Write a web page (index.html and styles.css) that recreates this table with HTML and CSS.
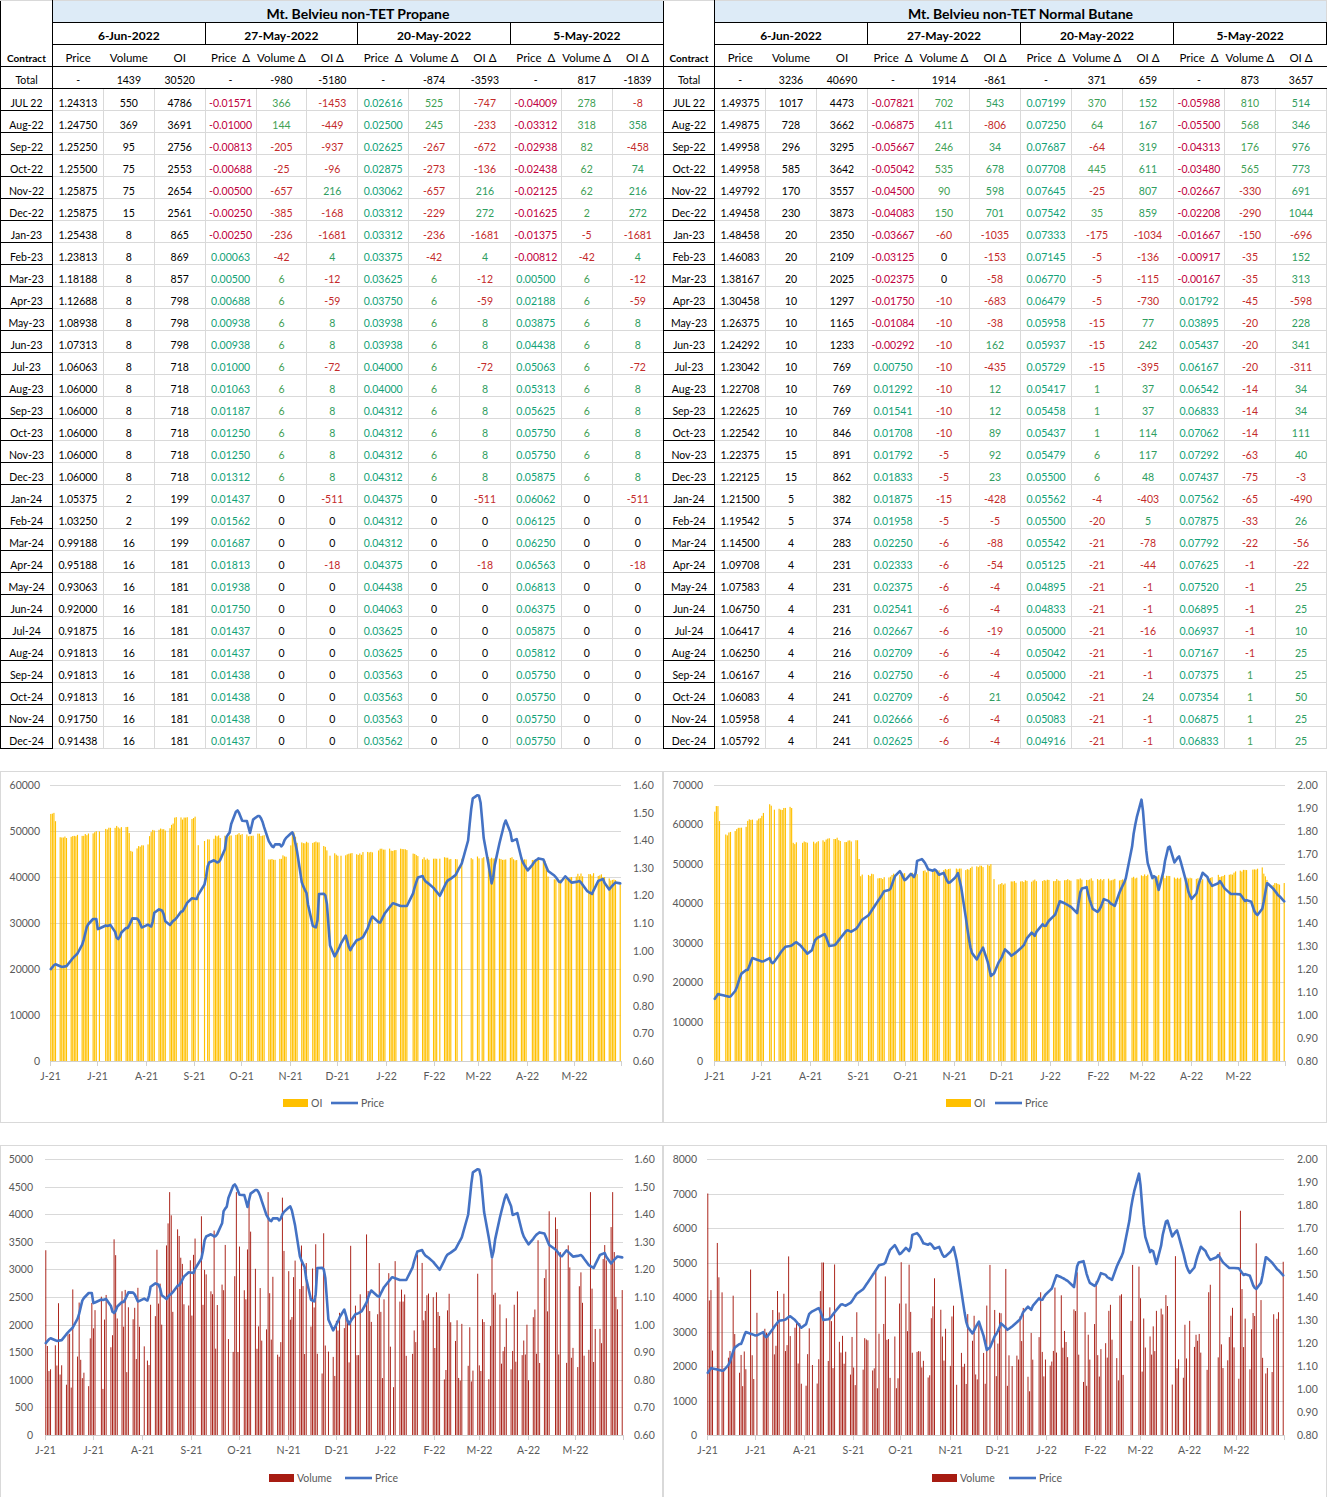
FILE: index.html
```html
<!DOCTYPE html>
<html lang="en">
<head>
<meta charset="utf-8">
<title>Mt. Belvieu non-TET</title>
<link rel="stylesheet" href="styles.css">
</head>
<body>
<div class="tables">
  <table class="tbl left" id="t1"></table>
  <table class="tbl right" id="t2"></table>
</div>
<div class="charts">
  <div class="chart" id="c1"></div>
  <div class="chart" id="c2"></div>
  <div class="chart" id="c3"></div>
  <div class="chart" id="c4"></div>
</div>
<script src="app.js"></script>
</body>
</html>
```
FILE: styles.css
```css
* { box-sizing: border-box; }
body {
  margin: 0;
  width: 1327px;
  background: #fff;
  color: #000;
  font-family: Lato, "DejaVu Sans", sans-serif;
}
.tables { display: flex; align-items: flex-start; }
.tbl { border-collapse: collapse; table-layout: fixed; }
.tbl.left { width: 663px; }
.tbl.right { width: 664px; }
.tbl.left col.c0 { width: 52px; }
.tbl.right col.c0 { width: 51px; }
.tbl td {
  height: 22px;
  padding: 0;
  font-size: 10.5px;
  line-height: 13px;
  text-align: center;
  vertical-align: bottom;
  white-space: nowrap;
  overflow: hidden;
  border: 1px solid #d9d9d9;
}
.tbl.left td:last-child { border-right: none; }
.tbl td.title {
  background: #ddebf7;
  font-weight: 700;
  font-size: 14px;
  vertical-align: middle;
  padding: 3px 0 0;
  border-left: 1px solid #000;
  border-bottom: 1px solid #000;
}
.tbl .r-date td {
  border: 1px solid #000;
  font-weight: 700;
  font-size: 12px;
  vertical-align: middle;
  padding: 4px 0 0;
}
.tbl .r-head td {
  border-left: none;
  border-right: none;
  border-bottom: 1px solid #000;
  font-size: 11.5px;
  vertical-align: middle;
  padding: 4px 0 0;
}
.tbl .r-total td {
  border-left: none;
  border-right: none;
  border-bottom: 1px solid #000;
  vertical-align: middle;
  padding: 5px 0 0;
}
.tbl td.con {
  border-left: 1px solid #000;
  border-right: 1px solid #000;
  border-bottom: 1px solid #000;
  border-top: 1px solid #000;
}
.tbl td.con.top { border-bottom: none; border-top-color: #d9d9d9; }
.tbl td.chead { font-weight: 700; font-size: 10px; border-top: none; padding-top: 6px; }
.np { color: #c00040; }
.nv { color: #c42a2a; }
.no { color: #c42a2a; }
.pp { color: #12a276; }
.pv { color: #3f9f55; }
.po { color: #2f9d5e; }

.charts {
  display: grid;
  grid-template-columns: 663px 664px;
  grid-template-rows: 352px 353px;
  row-gap: 22px;
  margin-top: 22px;
}
.chart {
  outline: 1px solid #d9d9d9;
  outline-offset: -1px;
  background: #fff;
}
.chart svg { display: block; }
.chart text {
  font-family: Lato, "DejaVu Sans", sans-serif;
  font-size: 10.5px;
  fill: #595959;
}
.chart .grid { stroke: #d9d9d9; stroke-width: 1; }
.chart .axis { stroke: #d0d0d0; stroke-width: 1; }
.chart .price { fill: none; stroke: #4472c4; stroke-width: 2.6; stroke-linejoin: round; stroke-linecap: round; }
```
FILE: app.js
```js
(function () {
  var DATES = ['6-Jun-2022', '27-May-2022', '20-May-2022', '5-May-2022'];
  var P = [
    'Total - 1439 30520 - -980 -5180 - -874 -3593 - 817 -1839',
    'JUL_22 1.24313 550 4786 -0.01571 366 -1453 0.02616 525 -747 -0.04009 278 -8',
    'Aug-22 1.24750 369 3691 -0.01000 144 -449 0.02500 245 -233 -0.03312 318 358',
    'Sep-22 1.25250 95 2756 -0.00813 -205 -937 0.02625 -267 -672 -0.02938 82 -458',
    'Oct-22 1.25500 75 2553 -0.00688 -25 -96 0.02875 -273 -136 -0.02438 62 74',
    'Nov-22 1.25875 75 2654 -0.00500 -657 216 0.03062 -657 216 -0.02125 62 216',
    'Dec-22 1.25875 15 2561 -0.00250 -385 -168 0.03312 -229 272 -0.01625 2 272',
    'Jan-23 1.25438 8 865 -0.00250 -236 -1681 0.03312 -236 -1681 -0.01375 -5 -1681',
    'Feb-23 1.23813 8 869 0.00063 -42 4 0.03375 -42 4 -0.00812 -42 4',
    'Mar-23 1.18188 8 857 0.00500 6 -12 0.03625 6 -12 0.00500 6 -12',
    'Apr-23 1.12688 8 798 0.00688 6 -59 0.03750 6 -59 0.02188 6 -59',
    'May-23 1.08938 8 798 0.00938 6 8 0.03938 6 8 0.03875 6 8',
    'Jun-23 1.07313 8 798 0.00938 6 8 0.03938 6 8 0.04438 6 8',
    'Jul-23 1.06063 8 718 0.01000 6 -72 0.04000 6 -72 0.05063 6 -72',
    'Aug-23 1.06000 8 718 0.01063 6 8 0.04000 6 8 0.05313 6 8',
    'Sep-23 1.06000 8 718 0.01187 6 8 0.04312 6 8 0.05625 6 8',
    'Oct-23 1.06000 8 718 0.01250 6 8 0.04312 6 8 0.05750 6 8',
    'Nov-23 1.06000 8 718 0.01250 6 8 0.04312 6 8 0.05750 6 8',
    'Dec-23 1.06000 8 718 0.01312 6 8 0.04312 6 8 0.05875 6 8',
    'Jan-24 1.05375 2 199 0.01437 0 -511 0.04375 0 -511 0.06062 0 -511',
    'Feb-24 1.03250 2 199 0.01562 0 0 0.04312 0 0 0.06125 0 0',
    'Mar-24 0.99188 16 199 0.01687 0 0 0.04312 0 0 0.06250 0 0',
    'Apr-24 0.95188 16 181 0.01813 0 -18 0.04375 0 -18 0.06563 0 -18',
    'May-24 0.93063 16 181 0.01938 0 0 0.04438 0 0 0.06813 0 0',
    'Jun-24 0.92000 16 181 0.01750 0 0 0.04063 0 0 0.06375 0 0',
    'Jul-24 0.91875 16 181 0.01437 0 0 0.03625 0 0 0.05875 0 0',
    'Aug-24 0.91813 16 181 0.01437 0 0 0.03625 0 0 0.05812 0 0',
    'Sep-24 0.91813 16 181 0.01438 0 0 0.03563 0 0 0.05750 0 0',
    'Oct-24 0.91813 16 181 0.01438 0 0 0.03563 0 0 0.05750 0 0',
    'Nov-24 0.91750 16 181 0.01438 0 0 0.03563 0 0 0.05750 0 0',
    'Dec-24 0.91438 16 181 0.01437 0 0 0.03562 0 0 0.05750 0 0'
  ];
  var B = [
    'Total - 3236 40690 - 1914 -861 - 371 659 - 873 3657',
    'JUL_22 1.49375 1017 4473 -0.07821 702 543 0.07199 370 152 -0.05988 810 514',
    'Aug-22 1.49875 728 3662 -0.06875 411 -806 0.07250 64 167 -0.05500 568 346',
    'Sep-22 1.49958 296 3295 -0.05667 246 34 0.07687 -64 319 -0.04313 176 976',
    'Oct-22 1.49958 585 3642 -0.05042 535 678 0.07708 445 611 -0.03480 565 773',
    'Nov-22 1.49792 170 3557 -0.04500 90 598 0.07645 -25 807 -0.02667 -330 691',
    'Dec-22 1.49458 230 3873 -0.04083 150 701 0.07542 35 859 -0.02208 -290 1044',
    'Jan-23 1.48458 20 2350 -0.03667 -60 -1035 0.07333 -175 -1034 -0.01667 -150 -696',
    'Feb-23 1.46083 20 2109 -0.03125 0 -153 0.07145 -5 -136 -0.00917 -35 152',
    'Mar-23 1.38167 20 2025 -0.02375 0 -58 0.06770 -5 -115 -0.00167 -35 313',
    'Apr-23 1.30458 10 1297 -0.01750 -10 -683 0.06479 -5 -730 0.01792 -45 -598',
    'May-23 1.26375 10 1165 -0.01084 -10 -38 0.05958 -15 77 0.03895 -20 228',
    'Jun-23 1.24292 10 1233 -0.00292 -10 162 0.05937 -15 242 0.05437 -20 341',
    'Jul-23 1.23042 10 769 0.00750 -10 -435 0.05729 -15 -395 0.06167 -20 -311',
    'Aug-23 1.22708 10 769 0.01292 -10 12 0.05417 1 37 0.06542 -14 34',
    'Sep-23 1.22625 10 769 0.01541 -10 12 0.05458 1 37 0.06833 -14 34',
    'Oct-23 1.22542 10 846 0.01708 -10 89 0.05437 1 114 0.07062 -14 111',
    'Nov-23 1.22375 15 891 0.01792 -5 92 0.05479 6 117 0.07292 -63 40',
    'Dec-23 1.22125 15 862 0.01833 -5 23 0.05500 6 48 0.07437 -75 -3',
    'Jan-24 1.21500 5 382 0.01875 -15 -428 0.05562 -4 -403 0.07562 -65 -490',
    'Feb-24 1.19542 5 374 0.01958 -5 -5 0.05500 -20 5 0.07875 -33 26',
    'Mar-24 1.14500 4 283 0.02250 -6 -88 0.05542 -21 -78 0.07792 -22 -56',
    'Apr-24 1.09708 4 231 0.02333 -6 -54 0.05125 -21 -44 0.07625 -1 -22',
    'May-24 1.07583 4 231 0.02375 -6 -4 0.04895 -21 -1 0.07520 -1 25',
    'Jun-24 1.06750 4 231 0.02541 -6 -4 0.04833 -21 -1 0.06895 -1 25',
    'Jul-24 1.06417 4 216 0.02667 -6 -19 0.05000 -21 -16 0.06937 -1 10',
    'Aug-24 1.06250 4 216 0.02709 -6 -4 0.05042 -21 -1 0.07167 -1 25',
    'Sep-24 1.06167 4 216 0.02750 -6 -4 0.05000 -21 -1 0.07375 1 25',
    'Oct-24 1.06083 4 241 0.02709 -6 21 0.05042 -21 24 0.07354 1 50',
    'Nov-24 1.05958 4 241 0.02666 -6 -4 0.05083 -21 -1 0.06875 1 25',
    'Dec-24 1.05792 4 241 0.02625 -6 -4 0.04916 -21 -1 0.06833 1 25'
  ];

  function cellClass(v, i) {
    if (i < 3 || v === '-' || Number(v) === 0) return '';
    var k = (i - 3) % 3;
    var neg = v.charAt(0) === '-';
    return (neg ? 'n' : 'p') + ['p', 'v', 'o'][k];
  }

  function buildTable(el, title, rows) {
    var h = '<colgroup><col class="c0">';
    for (var c = 0; c < 12; c++) h += '<col>';
    h += '</colgroup>';
    h += '<tr class="r-title"><td class="con top" rowspan="2"></td><td class="title" colspan="12">' + title + '</td></tr>';
    h += '<tr class="r-date">';
    DATES.forEach(function (d) { h += '<td class="date" colspan="3">' + d + '</td>'; });
    h += '</tr>';
    h += '<tr class="r-head"><td class="con chead">Contract</td><td>Price</td><td>Volume</td><td>OI</td>';
    for (var j = 0; j < 3; j++) h += '<td>Price&nbsp;&nbsp;\u0394</td><td>Volume \u0394</td><td>OI \u0394</td>';
    h += '</tr>';
    rows.forEach(function (r, ri) {
      var t = r.split(' ');
      h += '<tr' + (ri === 0 ? ' class="r-total"' : '') + '><td class="con">' + t[0].replace('_', ' ') + '</td>';
      for (var i = 1; i < t.length; i++) {
        var cl = ri === 0 ? '' : cellClass(t[i], i - 1);
        h += '<td' + (cl ? ' class="' + cl + '"' : '') + '>' + t[i] + '</td>';
      }
      h += '</tr>';
    });
    el.innerHTML = h;
  }
  buildTable(document.getElementById('t1'), 'Mt. Belvieu non-TET Propane', P);
  buildTable(document.getElementById('t2'), 'Mt. Belvieu non-TET Normal Butane', B);

  /* ---------- charts ---------- */
  function rng(a) {
    return function () {
      a |= 0; a = a + 0x6D2B79F5 | 0;
      var t = Math.imul(a ^ a >>> 15, 1 | a);
      t = t + Math.imul(t ^ t >>> 7, 61 | t) ^ t;
      return ((t ^ t >>> 14) >>> 0) / 4294967296;
    };
  }
  function interp(kp, f) {
    if (f <= kp[0][0]) return kp[0][1];
    for (var i = 1; i < kp.length; i++) {
      if (f <= kp[i][0]) {
        var a = kp[i - 1], b = kp[i];
        var d = b[0] - a[0];
        var t = d ? (f - a[0]) / d : 1;
        return a[1] + (b[1] - a[1]) * t;
      }
    }
    return kp[kp.length - 1][1];
  }

  var priceP = [[50,969],[55,963],[62,966],[67,965],[72,958],[78,952],[83,942],[87,925],[92,918],[97,918],[98,930],[102,923],[107,925],[113,923],[117,938],[119,938],[123,927],[128,927],[133,916],[138,918],[142,927],[147,923],[152,926],[154,912],[158,908],[163,910],[167,928],[173,920],[176,918],[178,912],[183,910],[187,902],[190,897],[197,898],[200,888],[205,883],[208,863],[212,858],[218,862],[223,855],[225,848],[227,832],[229,835],[233,813],[238,809],[243,822],[247,820],[250,832],[254,815],[260,815],[263,822],[267,837],[273,847],[277,840],[282,846],[285,838],[290,833],[293,831],[297,850],[300,877],[304,887],[307,893],[310,923],[313,925],[317,927],[319,893],[323,892],[326,895],[328,913],[331,960],[335,955],[340,945],[345,932],[350,950],[355,940],[360,938],[365,935],[372,915],[376,920],[380,922],[385,912],[393,902],[400,905],[410,905],[415,885],[420,870],[425,880],[432,885],[440,895],[447,880],[455,875],[462,862],[468,840],[472,800],[474,793],[480,795],[484,840],[488,860],[492,885],[495,862],[500,840],[505,820],[508,818],[512,840],[517,838],[522,860],[528,870],[535,860],[542,855],[548,870],[555,875],[560,882],[565,875],[572,882],[580,880],[587,890],[592,893],[598,880],[603,878],[608,890],[612,885],[617,880],[621,883]]
    .map(function (p) { return [(p[0] - 50) / 571, 0.6 + (1060 - p[1]) / 276]; });

  var priceB = [[714,999],[718,993],[722,994],[730,996],[736,989],[740,976],[743,969],[748,969],[752,957],[758,959],[763,961],[768,953],[772,963],[776,959],[781,951],[786,945],[791,945],[796,941],[801,945],[806,951],[810,956],[815,939],[820,935],[825,933],[830,947],[836,943],[842,935],[847,929],[852,931],[857,927],[862,919],[868,915],[874,906],[880,897],[885,889],[890,889],[895,875],[900,870],[905,880],[910,872],[915,877],[917,860],[922,858],[925,862],[930,872],[935,868],[940,875],[943,870],[948,882],[953,880],[958,872],[962,890],[966,918],[970,945],[975,962],[980,952],[984,945],[988,962],[992,980],[996,965],[1001,958],[1006,946],[1011,955],[1018,950],[1024,944],[1030,930],[1035,935],[1040,920],[1045,926],[1050,918],[1055,914],[1060,900],[1066,903],[1071,906],[1076,920],[1080,892],[1085,880],[1090,900],[1095,914],[1100,908],[1105,895],[1110,902],[1115,905],[1120,890],[1125,880],[1130,862],[1134,830],[1138,810],[1142,797],[1146,848],[1150,880],[1155,874],[1160,894],[1165,860],[1169,843],[1174,862],[1179,855],[1184,872],[1189,893],[1194,902],[1199,882],[1204,868],[1209,880],[1214,888],[1220,880],[1225,888],[1231,893],[1240,893],[1245,900],[1250,897],[1255,912],[1260,916],[1263,905],[1267,882],[1272,886],[1278,894],[1283,898],[1285,902]]
    .map(function (p) { return [(p[0] - 714) / 571, 0.8 + (1060 - p[1]) / 276 * 1.2]; });

  var oiP = [[50,53.7],[55,53.7],[57,48.5],[80,49],[95,49.5],[100,50.3],[125,51],[129,51],[130,45.5],[145,47.2],[149,47.5],[150,50],[170,50.5],[175,52.7],[192,52.9],[196,52.9],[197,46.8],[210,48.5],[235,49.2],[265,49.2],[268,43.5],[285,44.5],[290,45.5],[293,50],[297,47.5],[320,47.8],[330,44.8],[370,45.2],[380,46],[410,46],[420,44],[470,44.2],[545,43.8],[548,40],[560,39.5],[580,40.5],[600,40.5],[621,38.5]]
    .map(function (p) { return [(p[0] - 50) / 571, p[1] * 1000]; });

  var oiB = [[714,63],[717,65],[719,64.5],[720,57],[725,57.2],[731,58],[737,58.5],[740,59.4],[747,59.5],[748,61],[760,61.2],[763,63],[770,65],[775,63.5],[782,64],[792,64.4],[793,55.3],[800,55.3],[803,55.6],[820,55.4],[830,56.5],[837,56.5],[842,55.8],[858,56],[860,47.2],[873,47.2],[878,46.4],[890,46.4],[893,47.4],[920,47.7],[930,48.4],[960,48.5],[985,49.5],[992,50],[995,44.5],[1010,45.5],[1060,46],[1130,46],[1140,47.2],[1200,46],[1230,47.5],[1262,49],[1268,45],[1285,45]]
    .map(function (p) { return [(p[0] - 714) / 571, p[1] * 1000]; });

  var volPkp = [[0,1700],[0.15,1900],[0.2,2900],[0.45,2800],[0.5,1900],[0.85,1900],[0.9,2700],[1,2700]];
  var volBkp = [[0,3800],[0.05,3100],[0.3,3000],[0.5,2900],[0.6,2400],[0.7,3000],[0.9,3200],[1,3400]];

  var N = 364;
  var hol = { '2021-07-05': 1, '2021-09-06': 1, '2021-11-25': 1, '2021-12-24': 1, '2022-01-17': 1, '2022-02-21': 1, '2022-04-15': 1 };
  var days = [];
  for (var d = 0; d < N; d++) {
    var dt = new Date(Date.UTC(2021, 5, 1 + d));
    var wd = dt.getUTCDay();
    if (wd === 0 || wd === 6) continue;
    if (hol[dt.toISOString().slice(0, 10)]) continue;
    days.push(d);
  }
  var t0 = Date.UTC(2021, 5, 1);
  var months = [];
  for (var m = 0; m < 12; m++) {
    months.push({
      d: (Date.UTC(2021, 5 + m, 1) - t0) / 86400000,
      label: 'JJASONDJFMAM'.charAt(m) + '-' + (m < 7 ? '21' : '22')
    });
  }

  function genVolume(kp, seed, cap, spikes) {
    var r = rng(seed);
    return days.map(function (d) {
      var f = (d + 0.5) / N;
      var base = interp(kp, f);
      var v = base * (0.45 + r() * 0.95);
      if (r() < 0.08) v = base * 1.45 + r() * 900;
      if (r() < 0.05) v = 0;
      spikes.forEach(function (s) { if (Math.abs(f - s[0]) < 0.0015) v = s[1]; });
      return Math.min(v, cap);
    });
  }
  function genOI(kp, seed) {
    var r = rng(seed);
    return days.map(function (d) {
      var f = (d + 0.5) / N;
      var v = interp(kp, f) + (r() - 0.5) * 700;
      if (r() < 0.04) v = 0;
      return v;
    });
  }

  var charts = [
    { id: 'c1', w: 663, h: 352, L: 50, R: 621, T: 14, Bt: 290, lmax: 60000, lstep: 10000, rmin: 0.6, rmax: 1.6, lx: 40, rx: 633,
      color: '#ffc000', bars: genOI(oiP, 11), price: priceP, bw: 1.15, leg: { sw: 283, label: 'OI', ln: 331 }, ly: 332 },
    { id: 'c2', w: 664, h: 352, L: 51, R: 622, T: 14, Bt: 290, lmax: 70000, lstep: 10000, rmin: 0.8, rmax: 2.0, lx: 40, rx: 634,
      color: '#ffc000', bars: genOI(oiB, 23), price: priceB, bw: 1.15, leg: { sw: 283, label: 'OI', ln: 332 }, ly: 332 },
    { id: 'c3', w: 663, h: 353, L: 45, R: 623, T: 14, Bt: 290, lmax: 5000, lstep: 500, rmin: 0.6, rmax: 1.6, lx: 33, rx: 634,
      color: '#a71c12', bars: genVolume(volPkp, 7, 4400, [[0.216, 4400], [0.41, 4300]]), price: priceP, bw: 0.95, leg: { sw: 269, label: 'Volume', ln: 345 }, ly: 333 },
    { id: 'c4', w: 664, h: 353, L: 44, R: 621, T: 14, Bt: 290, lmax: 8000, lstep: 1000, rmin: 0.8, rmax: 2.0, lx: 34, rx: 634,
      color: '#a71c12', bars: genVolume(volBkp, 5, 7000, [[0.002, 7000], [0.924, 6500], [0.2, 5000]]), price: priceB, bw: 0.95, leg: { sw: 269, label: 'Volume', ln: 346 }, ly: 333 }
  ];

  function fx(c, d) { return c.L + d / N * (c.R - c.L); }

  charts.forEach(function (c) {
    var W = c.R - c.L, H = c.Bt - c.T;
    var s = '<svg xmlns="http://www.w3.org/2000/svg" width="' + c.w + '" height="' + c.h + '" viewBox="0 0 ' + c.w + ' ' + c.h + '">';
    var n = Math.round(c.lmax / c.lstep), i, y;
    for (i = 0; i <= n; i++) {
      y = c.Bt - H * i / n;
      if (i > 0) s += '<line class="grid" x1="' + c.L + '" x2="' + c.R + '" y1="' + (Math.round(y) + 0.5) + '" y2="' + (Math.round(y) + 0.5) + '"/>';
      s += '<text x="' + c.lx + '" y="' + (y + 4) + '" text-anchor="end">' + (c.lstep * i) + '</text>';
    }
    var rn = Math.round((c.rmax - c.rmin) / 0.1);
    for (i = 0; i <= rn; i++) {
      y = c.Bt - H * i / rn;
      s += '<text x="' + c.rx + '" y="' + (y + 4) + '">' + (c.rmin + 0.1 * i).toFixed(2) + '</text>';
    }
    var bars = '';
    days.forEach(function (d, k) {
      var v = c.bars[k];
      if (!v || v <= 0) return;
      var bh = v / c.lmax * H;
      var x = fx(c, d + 0.5) - c.bw / 2;
      bars += '<rect x="' + x.toFixed(2) + '" y="' + (c.Bt - bh).toFixed(2) + '" width="' + c.bw + '" height="' + bh.toFixed(2) + '"/>';
    });
    s += '<g fill="' + c.color + '">' + bars + '</g>';
    s += '<line class="axis" x1="' + c.L + '" x2="' + c.R + '" y1="' + (c.Bt + 0.5) + '" y2="' + (c.Bt + 0.5) + '"/>';
    months.forEach(function (mo) {
      var x = Math.round(fx(c, mo.d)) + 0.5;
      s += '<line class="axis" x1="' + x + '" x2="' + x + '" y1="' + c.Bt + '" y2="' + (c.Bt + 5) + '"/>';
      s += '<text x="' + x + '" y="' + (c.Bt + 19) + '" text-anchor="middle">' + mo.label + '</text>';
    });
    s += '<line class="axis" x1="' + (c.R + 0.5) + '" x2="' + (c.R + 0.5) + '" y1="' + c.Bt + '" y2="' + (c.Bt + 5) + '"/>';
    var pts = days.map(function (d) {
      var f = (d + 0.5) / N;
      var p = interp(c.price, f);
      var yy = c.Bt - (p - c.rmin) / (c.rmax - c.rmin) * H;
      return fx(c, d + 0.5).toFixed(1) + ',' + yy.toFixed(1);
    });
    s += '<polyline class="price" points="' + pts.join(' ') + '"/>';
    var lg = c.leg, ly = c.ly;
    s += '<rect x="' + lg.sw + '" y="' + (ly - 4) + '" width="25" height="8" fill="' + c.color + '"/>';
    s += '<text x="' + (lg.sw + 28) + '" y="' + (ly + 4) + '">' + lg.label + '</text>';
    s += '<line x1="' + lg.ln + '" x2="' + (lg.ln + 27) + '" y1="' + ly + '" y2="' + ly + '" stroke="#4472c4" stroke-width="2.6"/>';
    s += '<text x="' + (lg.ln + 30) + '" y="' + (ly + 4) + '">Price</text>';
    s += '</svg>';
    document.getElementById(c.id).innerHTML = s;
  });
})();
```
